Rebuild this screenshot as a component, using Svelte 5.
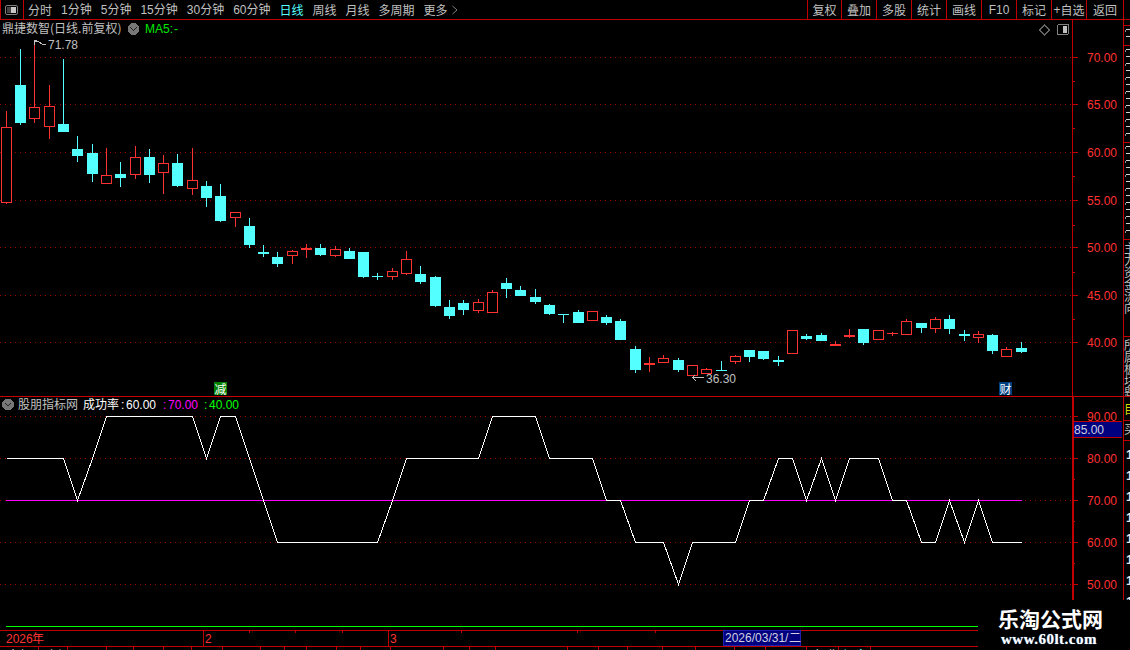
<script lang="ts">
	const leftTabs = [
		{ n: '', cn: '分时' },
		{ n: '1', cn: '分钟' },
		{ n: '5', cn: '分钟' },
		{ n: '15', cn: '分钟' },
		{ n: '30', cn: '分钟' },
		{ n: '60', cn: '分钟' },
		{ n: '', cn: '日线', on: true },
		{ n: '', cn: '周线' },
		{ n: '', cn: '月线' },
		{ n: '', cn: '多周期' },
		{ n: '', cn: '更多' }
	];
	const rightBtns = [
		{ cn: '复权', w: 34 },
		{ cn: '叠加', w: 35 },
		{ cn: '多股', w: 35 },
		{ cn: '统计', w: 35 },
		{ cn: '画线', w: 35 },
		{ n: 'F10', cn: '', w: 35 },
		{ cn: '标记', w: 35 },
		{ n: '+', cn: '自选', w: 35 },
		{ cn: '返回', w: 37 }
	];

	// x, up, high, top, bottom, low
	const candles: [number, number, number, number, number, number][] = [
		[6, 1, 111, 127, 203, 204], [20, 0, 49, 85, 123, 125], [34, 1, 42, 107, 119, 123],
		[49, 1, 85, 106, 127, 139], [63, 0, 59, 124, 132, 132], [77, 0, 136, 149, 156, 162],
		[92, 0, 144, 153, 174, 182], [106, 1, 148, 175, 184, 184], [120, 0, 162, 174, 178, 187],
		[135, 1, 146, 157, 175, 179], [149, 0, 149, 157, 175, 183], [163, 1, 155, 163, 173, 194],
		[177, 0, 154, 163, 186, 187], [192, 1, 148, 180, 189, 195], [206, 0, 181, 186, 198, 207],
		[220, 0, 184, 196, 221, 222], [235, 1, 212, 212, 218, 227], [249, 0, 218, 226, 245, 248],
		[263, 0, 245, 252, 254, 257], [277, 0, 252, 257, 264, 267], [292, 1, 250, 251, 256, 264],
		[306, 1, 244, 248, 250, 258], [320, 0, 244, 248, 255, 256], [335, 1, 246, 249, 256, 257],
		[349, 0, 248, 251, 259, 259], [363, 0, 252, 252, 277, 278], [377, 0, 273, 276, 277, 280],
		[392, 1, 268, 271, 277, 280], [406, 1, 251, 259, 274, 275], [420, 0, 266, 274, 282, 284],
		[435, 0, 276, 277, 306, 307], [449, 0, 300, 307, 316, 319], [463, 0, 300, 303, 310, 315],
		[478, 1, 299, 302, 311, 313], [492, 1, 290, 292, 313, 313], [506, 0, 278, 283, 289, 298],
		[520, 0, 286, 290, 296, 296], [535, 0, 289, 297, 302, 304], [549, 0, 304, 305, 314, 315],
		[563, 0, 314, 314, 315, 323], [578, 0, 310, 312, 323, 323], [592, 1, 311, 311, 321, 321],
		[606, 0, 315, 317, 323, 325], [620, 0, 319, 321, 340, 340], [635, 0, 346, 349, 370, 373],
		[649, 1, 357, 363, 365, 372], [663, 1, 355, 358, 363, 363], [678, 0, 358, 360, 370, 372],
		[692, 1, 365, 365, 376, 376], [706, 1, 368, 369, 374, 374], [721, 0, 361, 370, 371, 371],
		[735, 1, 355, 356, 362, 364], [749, 0, 350, 350, 357, 362], [763, 0, 351, 351, 359, 360],
		[778, 0, 356, 360, 362, 366], [792, 1, 330, 330, 354, 354], [806, 0, 334, 336, 339, 340],
		[821, 0, 333, 335, 341, 341], [835, 1, 341, 344, 346, 346], [849, 1, 329, 335, 337, 338],
		[863, 0, 329, 329, 343, 345], [878, 1, 330, 330, 340, 340], [892, 1, 332, 333, 334, 336],
		[906, 1, 319, 321, 335, 335], [921, 0, 323, 323, 328, 333], [935, 1, 317, 319, 329, 333],
		[949, 0, 315, 319, 329, 334], [964, 0, 330, 334, 336, 341], [978, 1, 331, 334, 338, 343],
		[992, 0, 334, 335, 351, 354], [1006, 1, 347, 349, 357, 357], [1021, 0, 342, 348, 352, 353]
	];

	const rate = [
		80, 80, 80, 80, 80, 70, 80, 90, 90, 90, 90, 90, 90, 90, 80, 90, 90, 80, 70, 60, 60, 60, 60, 60,
		60, 60, 60, 70, 80, 80, 80, 80, 80, 80, 90, 90, 90, 90, 80, 80, 80, 80, 70, 70, 60, 60, 60, 50,
		60, 60, 60, 60, 70, 70, 80, 80, 70, 80, 70, 80, 80, 80, 70, 70, 60, 60, 70, 60, 70, 60, 60, 60
	];
	const rateY = (v: number) => 500.5 - (v - 70) * 4.2;
	const ratePoints = rate.map((v, i) => `${candles[i][0] + 0.5},${rateY(v)}`).join(' ');

	const priceAxis = [
		{ y: 57, t: '70.00' }, { y: 104, t: '65.00' }, { y: 152, t: '60.00' }, { y: 200, t: '55.00' },
		{ y: 247, t: '50.00' }, { y: 295, t: '45.00' }, { y: 342, t: '40.00' }
	];
	const priceMinor = [81, 128, 176, 225, 272, 319];
	const rateAxis = [
		{ y: 416, t: '90.00' }, { y: 458, t: '80.00' }, { y: 500, t: '70.00' }, { y: 542, t: '60.00' }, { y: 584, t: '50.00' }
	];
	const rateMinor = [479, 521, 563];

	const stops = [39, 68, 107, 134, 164, 192, 223, 261, 285, 307, 337, 361, 391, 444, 470, 496, 568, 599, 628, 663, 696, 735, 766, 807, 839, 871, 1130];
	const tabLabels: Record<number, string> = { 0: '全部', 1: '上证', 24: '行业', 25: '概念' };
	const tabs = stops.map((s, i) => ({ w: s - (i ? stops[i - 1] : 0), t: tabLabels[i] ?? '', hot: i === 25 }));

	const sideRows = {
		text: '主力资金流向',
		text2: '所属板块题材',
		yellow: '目',
		grey: '买',
		ones: '1111111111'
	};
</script>

<div class="screen">
	<header class="toolbar">
		<div class="home">
			<svg width="14" height="12" viewBox="0 0 14 12">
				<rect class="ico" x="0.5" y="1.5" width="12" height="9" rx="1.5" />
				<rect x="2" y="3" width="4" height="6" fill="#444" />
				<rect x="6" y="3" width="5" height="6" fill="#c8c8c8" />
			</svg>
		</div>
		<nav class="periods">
			{#each leftTabs as tab}
				<span class:on={tab.on}>{#if tab.n}<span class="n">{tab.n}</span>{/if}{tab.cn}</span>
			{/each}
			<svg width="8" height="10" viewBox="0 0 8 10"><path class="ico" d="M1.5 1 L6 5 L1.5 9" /></svg>
		</nav>
		<div class="actions">
			{#each rightBtns as btn}
				<span class="btn" style="width:{btn.w}px">{#if btn.n}<span class="n">{btn.n}</span>{/if}{btn.cn}</span>
			{/each}
		</div>
	</header>

	<div class="pane price">
		<svg class="canvas" width="1123" height="376" viewBox="0 20 1123 376">
			{#each priceAxis as a}
				<line class="grid" x1="0" x2="1072" y1={a.y + 0.5} y2={a.y + 0.5} />
				<line class="axis" x1="1072" x2="1078" y1={a.y + 0.5} y2={a.y + 0.5} />
				<text class="num red" x="1087" y={a.y + 5}>{a.t}</text>
			{/each}
			{#each priceMinor as y}
				<line class="axis" x1="1072" x2="1075" y1={y + 0.5} y2={y + 0.5} />
			{/each}
			<line class="axis" x1="1072.5" x2="1072.5" y1="20" y2="397" />

			{#each candles as [x, up, high, top, bottom, low]}
				<line class={up ? 'wick-up' : 'wick-down'} x1={x + 0.5} x2={x + 0.5} y1={high} y2={low} />
				{#if up && bottom - top > 2}
					<rect class="body-up" x={x - 4.5} y={top + 0.5} width="10" height={bottom - top - 1} />
				{:else}
					<rect class={up ? 'solid-up' : 'solid-down'} x={x - 5} y={top} width="11" height={bottom - top} />
				{/if}
			{/each}

			<text class="cn grey" x="2" y="33">鼎捷数智(日线.前复权)</text>
			<circle cx="133.5" cy="29" r="6" fill="#777" />
			<path d="M130.5 27.5 L133.5 30.5 L136.5 27.5" fill="none" stroke="#222" stroke-width="1.4" />
			<text class="num green" x="145" y="33">MA5:<tspan dx="1">-</tspan></text>

			<path class="note" d="M34.5 45 V41 L37 40 M35 41 L39 42 L42 44 L46 44" />
			<text class="num grey" x="48" y="49">71.78</text>
			<path class="note" d="M704 377.5 H692.5 L696 381 M692.5 377.5 L695 375" />
			<text class="num grey" x="706" y="383">36.30</text>

			<path d="M1044.5 25 L1049.5 30 L1044.5 35 L1039.5 30 Z" fill="none" stroke="#666" />
			<rect class="ico" x="1057.5" y="24.5" width="11" height="10" rx="1.5" />
			<rect x="1063" y="26" width="4" height="7" fill="#c0c0c0" />
		</svg>
		<aside class="side">
			<div class="cell" style="height:6px"></div>
			<div class="cell dense" style="height:20px"></div>
			<div class="cell dense" style="height:97px"></div>
			<div class="cell dense" style="height:97px"></div>
			<div class="cell" style="height:97px">{sideRows.text}</div>
			<div class="cell last" style="height:59px">{sideRows.text2}</div>
		</aside>
		<span class="badge jian">减</span>
		<span class="badge cai">财</span>
	</div>

	<div class="pane rate">
		<svg class="canvas" width="1123" height="233" viewBox="0 397 1123 233">
			{#each rateAxis as a}
				<line class="grid" x1="0" x2="1072" y1={a.y + 0.5} y2={a.y + 0.5} />
				<line class="axis" x1="1073" x2="1078" y1={a.y + 0.5} y2={a.y + 0.5} />
				<text class="num red" x="1087" y={a.y + 5}>{a.t}</text>
			{/each}
			{#each rateMinor as y}
				<line class="axis" x1="1073" x2="1075" y1={y + 0.5} y2={y + 0.5} />
			{/each}
			<line class="axis thick" x1="1073" x2="1073" y1="397" y2="630" />

			<line class="level pink" x1="6" x2="1022" y1="500.5" y2="500.5" />
			<line class="level lime" x1="6" x2="1022" y1="626.5" y2="626.5" />
			<polyline class="rate-line" points={ratePoints} />

			<circle cx="8" cy="404.5" r="6" fill="#777" />
			<path d="M5 403 L8 406 L11 403" fill="none" stroke="#222" stroke-width="1.4" />
			<text class="cn grey" x="18" y="409">股朋指标网</text>
			<text class="cn white" x="83" y="409">成功率</text>
			<text class="num white" x="121" y="409">:</text>
			<text class="num white" x="126" y="409">60.00</text>
			<text class="num pinktxt" x="163" y="409">:</text>
			<text class="num pinktxt" x="168" y="409">70.00</text>
			<text class="num greenbr" x="204" y="409">:</text>
			<text class="num greenbr" x="209" y="409">40.00</text>

			<rect x="1074" y="421" width="48" height="16" fill="#00007f" />
			<line class="axis" x1="1074" x2="1122" y1="421.5" y2="421.5" />
			<line class="axis" x1="1074" x2="1122" y1="437.5" y2="437.5" />
			<text class="num silver" x="1074" y="434">85.00</text>
		</svg>
		<aside class="side">
			<div class="cell yellow" style="height:24px">{sideRows.yellow}</div>
			<div class="cell" style="height:20px">{sideRows.grey}</div>
			<div class="cell ones">{sideRows.ones}</div>
		</aside>
	</div>

	<div class="timeline">
		<svg width="1130" height="17" viewBox="0 630 1130 17">
			<line class="axis" x1="203.5" x2="203.5" y1="630" y2="646" />
			<line class="axis" x1="388.5" x2="388.5" y1="630" y2="646" />
			{#each [249, 295, 342, 461, 577, 655] as x}
				<line class="axis" x1={x + 0.5} x2={x + 0.5} y1="631" y2="633" />
			{/each}
			<text class="num red" x="6" y="643">2026</text>
			<text class="cn red" x="32" y="643">年</text>
			<text class="num red" x="205" y="643">2</text>
			<text class="num red" x="390" y="643">3</text>
			<rect x="723.5" y="630.5" width="77" height="15" fill="#00007f" stroke="#2020b0" />
			<text class="num silver" x="725" y="642">2026/03/31/</text>
			<text class="cn silver" x="789" y="642">二</text>
		</svg>
	</div>

	<footer class="tabs">
		{#each tabs as tab}
			<span class:hot={tab.hot} style="width:{tab.w}px">{tab.t}</span>
		{/each}
	</footer>

	<div class="stamp">
		<strong>乐淘公式网</strong>
		<em>www.60lt.com</em>
	</div>
</div>

<style>
	:global(body) {
		margin: 0;
		background: #000;
	}

	.screen {
		position: relative;
		width: 1130px;
		height: 650px;
		overflow: hidden;
		background: #000;
		color: #c0c0c0;
		font: 12px/1 "Noto Sans CJK SC", sans-serif;
	}

	.n {
		font-family: "Liberation Sans", sans-serif;
	}

	.toolbar {
		display: flex;
		align-items: center;
		height: 19px;
		border-bottom: 1px solid #c00000;
	}

	.home {
		display: flex;
		align-items: center;
		justify-content: center;
		box-sizing: border-box;
		width: 24px;
		height: 19px;
		border-left: 1px solid #c00000;
		border-right: 1px solid #c00000;
	}

	.periods {
		display: flex;
		align-items: center;
		gap: 9px;
		margin-left: 4px;
	}

	.periods svg {
		margin-left: -6px;
	}

	.periods .on {
		color: #54ffff;
	}

	.actions {
		display: flex;
		margin-left: auto;
		margin-right: 6px;
		height: 19px;
		border-right: 1px solid #c00000;
	}

	.btn {
		display: flex;
		align-items: center;
		justify-content: center;
		box-sizing: border-box;
		border-left: 1px solid #c00000;
	}

	.pane {
		position: relative;
		display: flex;
		box-sizing: border-box;
	}

	.price {
		height: 376px;
	}

	.rate {
		height: 234px;
		border-top: 1px solid #c80000;
	}

	.canvas {
		display: block;
		flex: none;
		shape-rendering: crispEdges;
	}

	.canvas text,
	.timeline text {
		shape-rendering: auto;
	}

	.side {
		flex: none;
		box-sizing: border-box;
		width: 7px;
		border-left: 1px solid #c00000;
		overflow: hidden;
	}

	.cell {
		box-sizing: border-box;
		width: 12px;
		border-bottom: 1px solid #c00000;
		overflow: hidden;
		line-height: 12px;
		padding-top: 2px;
		word-break: break-all;
		color: #c0c0c0;
	}

	.dense {
		background:
			repeating-linear-gradient(#d0d0d0 0 1px, transparent 1px 7px) 2px 3px / 4px calc(100% - 5px) no-repeat,
			repeating-linear-gradient(#909090 0 2px, transparent 2px 14px) 1px 4px / 1px calc(100% - 6px) no-repeat;
	}

	.last {
		border-bottom: 0;
	}

	.yellow {
		color: #d8d800;
		padding-top: 6px;
	}

	.ones {
		width: 8px;
		margin-left: 2px;
		border: 0;
		padding-top: 3px;
		color: #e8e8e8;
		font: bold 13px/21px "Liberation Sans", sans-serif;
	}

	.badge {
		position: absolute;
		top: 362px;
		width: 13px;
		height: 13px;
		color: #fff;
		line-height: 13px;
		text-align: center;
	}

	.jian {
		left: 214px;
		background: #007f00;
	}

	.cai {
		left: 999px;
		background: #004080;
	}

	.ico {
		fill: none;
		stroke: #808080;
	}

	.grid {
		stroke: #9c0000;
		stroke-dasharray: 1 4;
	}

	.axis {
		stroke: #c00000;
	}

	.thick {
		stroke-width: 2;
	}

	.wick-up {
		stroke: #ff3232;
	}

	.wick-down {
		stroke: #54ffff;
	}

	.body-up {
		fill: #000;
		stroke: #ff3232;
	}

	.solid-up {
		fill: #ff3232;
	}

	.solid-down {
		fill: #54ffff;
	}

	.note {
		fill: none;
		stroke: #c0c0c0;
	}

	.level.pink {
		stroke: #ff00ff;
	}

	.level.lime {
		stroke: #00ff00;
	}

	.rate-line {
		fill: none;
		stroke: #fff;
	}

	.cn {
		font-family: "Noto Sans CJK SC", sans-serif;
		font-size: 12px;
	}

	.num {
		font-family: "Liberation Sans", sans-serif;
		font-size: 12px;
	}

	.red {
		fill: #ff3232;
	}

	.grey {
		fill: #c0c0c0;
	}

	.silver {
		fill: #d0d0e0;
	}

	.white {
		fill: #fff;
	}

	.green {
		fill: #00e800;
	}

	.greenbr {
		fill: #00ff00;
	}

	.pinktxt {
		fill: #ff00ff;
	}

	.timeline {
		box-sizing: border-box;
		height: 17px;
		border-top: 1px solid #c00000;
		border-bottom: 1px solid #c00000;
	}

	.timeline svg {
		display: block;
		margin-top: -1px;
		shape-rendering: crispEdges;
	}

	.tabs {
		display: flex;
		height: 4px;
		overflow: hidden;
	}

	.tabs span {
		flex: none;
		box-sizing: border-box;
		border-right: 1px solid #c00000;
		padding-left: 7px;
		color: #e0e0e0;
		line-height: 15px;
		white-space: nowrap;
		overflow: hidden;
	}

	.tabs .hot {
		color: #54ffff;
		padding-left: 4px;
	}

	.stamp {
		position: absolute;
		left: 978px;
		top: 600px;
		width: 152px;
		height: 50px;
		background: #000;
		display: flex;
		flex-direction: column;
		align-items: flex-start;
	}

	.stamp strong {
		margin: 7px 0 0 20px;
		color: #fff;
		font-size: 21px;
		line-height: 22px;
		font-weight: 700;
	}

	.stamp em {
		margin: 2px 0 0 23px;
		color: #fff;
		font: bold 15px/16px "Liberation Serif", serif;
		text-shadow: 0 0 1px #6ea8e0;
		letter-spacing: 0.5px;
	}
</style>
